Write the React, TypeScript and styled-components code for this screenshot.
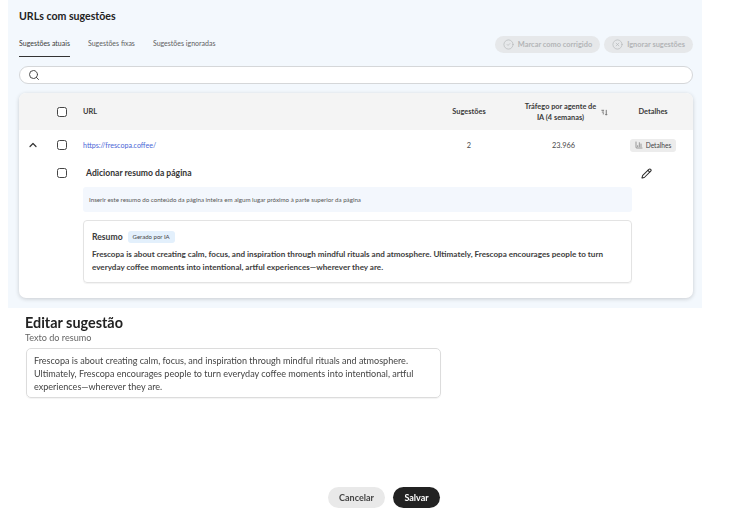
import * as React from "react";
import styled, { createGlobalStyle } from "styled-components";
import { ChevronUp, Search, CircleCheck, CircleX, Pencil, BarChart3 } from "lucide-react";

const GlobalStyle = createGlobalStyle`
  html, body {
    margin: 0;
    background: #fff;
  }
  body {
    font-family: Lato, "Open Sans", sans-serif;
    color: #2c2c2c;
  }
`;

const Page = styled.div`
  width: 750px;
  height: 526px;
  overflow: hidden;
  display: flex;
  flex-direction: column;
  filter: blur(0.25px);
`;
const Panel = styled.section`
  margin-left: 8px;
  width: 694px;
  height: 308px;
  box-sizing: border-box;
  padding: 9px 9px 0 11px;
  background: #f3f8fd;
  display: flex;
  flex-direction: column;
`;
const PanelTitle = styled.h2`
  margin: 0;
  font-size: 10.6px;
  line-height: 15px;
  font-weight: 700;
  color: #222;
`;
const TabBar = styled.div`
  margin-top: 12px;
  height: 21px;
  display: flex;
  align-items: flex-start;
  justify-content: space-between;
`;
const Tabs = styled.div`
  display: flex;
  gap: 18px;
`;
const Tab = styled.div<{ $active?: boolean }>`
  height: 21px;
  box-sizing: border-box;
  padding-top: 1px;
  font-size: 7px;
  line-height: 13px;
  color: ${(p) => (p.$active ? "#3a3a3a" : "#5f5f5f")};
  border-bottom: 1px solid ${(p) => (p.$active ? "#333" : "transparent")};
`;
const Actions = styled.div`
  display: flex;
  gap: 4px;
`;
const GhostAction = styled.div`
  height: 17px;
  padding: 0 8px 0 8px;
  border-radius: 9px;
  background: #e6e8ea;
  color: #b3b5b7;
  font-size: 7.4px;
  font-weight: 700;
  display: flex;
  align-items: center;
  gap: 4px;
`;
const SearchBox = styled.div`
  margin-top: 9px;
  height: 18px;
  box-sizing: border-box;
  border: 1px solid #d5d7d9;
  border-radius: 9px;
  background: #fff;
  display: flex;
  align-items: center;
  padding-left: 8px;
  color: #4a4a4a;
`;
const TableCard = styled.div`
  margin-top: 9px;
  width: 674px;
  height: 205px;
  background: #fff;
  border-radius: 7px;
  box-shadow: 0 1px 4px rgba(0, 0, 0, 0.18);
  overflow: hidden;
`;
const columns = "28px 30px 347px 90px 99px 80px";
const HeaderRow = styled.div`
  display: grid;
  grid-template-columns: ${columns};
  align-items: center;
  height: 37px;
  background: #f4f4f4;
  font-size: 7.4px;
  line-height: 11px;
  font-weight: 700;
  color: #3a3a3a;
`;
const DataRow = styled.div`
  display: grid;
  grid-template-columns: ${columns};
  align-items: center;
  height: 30px;
  font-size: 7.4px;
  color: #4a4a4a;
`;
const Cell = styled.div<{ $center?: boolean }>`
  display: flex;
  align-items: center;
  justify-content: ${(p) => (p.$center ? "center" : "flex-start")};
  text-align: ${(p) => (p.$center ? "center" : "left")};
`;
const UrlCell = styled(Cell)`
  padding-left: 6px;
`;
const UrlLink = styled.a`
  color: #4a66d6;
  font-size: 7.1px;
`;
const TrafficHead = styled(Cell)`
  position: relative;
  padding: 0 6px 0 0;
`;
const SortMark = styled.svg`
  position: absolute;
  right: 5px;
  top: 50%;
  margin-top: -3px;
`;
const Box = styled.span`
  display: block;
  width: 10px;
  height: 10px;
  box-sizing: border-box;
  border: 1.2px solid #444;
  border-radius: 2.5px;
  background: #fff;
`;
const DetailsBadge = styled.div`
  height: 13px;
  padding: 0 5px;
  border-radius: 3px;
  background: #ececec;
  display: flex;
  align-items: center;
  gap: 3px;
  font-size: 6.6px;
  color: #444;
`;
const Expanded = styled.div`
  display: grid;
  grid-template-columns: 28px 30px 6px 549px 1fr;
  grid-template-rows: 26px auto;
`;
const ExpandTitle = styled.div`
  grid-column: 4;
  padding-left: 3px;
  font-size: 8.6px;
  line-height: 26px;
  font-weight: 700;
  color: #333;
`;
const EditCell = styled.div`
  grid-column: 5;
  display: flex;
  align-items: center;
  justify-content: center;
  padding-right: 32px;
  color: #2c2c2c;
`;
const BoxCell = styled(Cell)`
  grid-column: 2;
  justify-content: center;
`;
const ExpandBody = styled.div`
  grid-column: 4;
  grid-row: 2;
  display: flex;
  flex-direction: column;
  gap: 8px;
  padding-top: 1px;
`;
const Hint = styled.div`
  height: 25px;
  box-sizing: border-box;
  padding-left: 6px;
  border-radius: 3px;
  background: #f3f7fd;
  font-size: 6.2px;
  line-height: 25px;
  color: #555;
`;
const SummaryCard = styled.div`
  height: 63px;
  box-sizing: border-box;
  border: 1px solid #e3e3e3;
  border-radius: 4px;
  box-shadow: 0 1px 1px rgba(0, 0, 0, 0.05);
  padding: 9px 8px 0;
`;
const SummaryHead = styled.div`
  display: flex;
  align-items: center;
  gap: 5px;
  height: 13px;
`;
const SummaryLabel = styled.span`
  font-size: 8.6px;
  font-weight: 700;
  color: #3a3a3a;
`;
const AiTag = styled.span`
  height: 12px;
  padding: 0 5px;
  border-radius: 3px;
  background: #e3f0fc;
  font-size: 6px;
  line-height: 12px;
  color: #444;
`;
const SummaryText = styled.p`
  margin: 5px 0 0;
  font-size: 8.1px;
  line-height: 13px;
  font-weight: 700;
  color: #3d3d3d;
  white-space: nowrap;
`;
const Editor = styled.section`
  padding: 6px 0 0 25px;
`;
const EditorTitle = styled.h1`
  margin: 0;
  font-size: 14.4px;
  line-height: 17px;
  font-weight: 700;
  color: #222;
`;
const FieldLabel = styled.div`
  font-size: 9.1px;
  line-height: 13px;
  color: #666;
`;
const TextBox = styled.div`
  margin: 4px 0 0 1px;
  width: 415px;
  height: 50px;
  box-sizing: border-box;
  border: 1px solid #dcdcdc;
  border-radius: 5px;
  padding: 5px 7px;
  font-size: 9.05px;
  line-height: 13px;
  color: #444;
  box-shadow: 0 1px 1px rgba(0, 0, 0, 0.05);
`;
const Footer = styled.footer`
  margin: 89px 0 0 328px;
  display: flex;
  gap: 8px;
`;
const FootButton = styled.button<{ $primary?: boolean }>`
  height: 21px;
  width: ${(p) => (p.$primary ? "47px" : "57px")};
  padding: 0;
  border: 0;
  border-radius: 11px;
  background: ${(p) => (p.$primary ? "#222" : "#e9e9e9")};
  color: ${(p) => (p.$primary ? "#fff" : "#444")};
  font-family: inherit;
  font-size: 9px;
  font-weight: 700;
`;

export default function App() {
  return (
    <Page>
      <GlobalStyle />
      <Panel>
        <PanelTitle>URLs com sugestões</PanelTitle>
        <TabBar>
          <Tabs>
            <Tab $active>Sugestões atuais</Tab>
            <Tab>Sugestões fixas</Tab>
            <Tab>Sugestões ignoradas</Tab>
          </Tabs>
          <Actions>
            <GhostAction>
              <CircleCheck size={11} strokeWidth={1.4} />
              Marcar como corrigido
            </GhostAction>
            <GhostAction>
              <CircleX size={11} strokeWidth={1.4} />
              Ignorar sugestões
            </GhostAction>
          </Actions>
        </TabBar>
        <SearchBox>
          <Search size={12} strokeWidth={2} />
        </SearchBox>
        <TableCard>
          <HeaderRow>
            <Cell />
            <Cell $center>
              <Box />
            </Cell>
            <UrlCell>URL</UrlCell>
            <Cell $center>Sugestões</Cell>
            <TrafficHead $center>
              <span>
                Tráfego por agente de
                <br />
                IA (4 semanas)
              </span>
              <SortMark width="7" height="7" viewBox="0 0 8 8" fill="none" stroke="#555" strokeWidth="0.9">
                <path d="M0.5 1.5h3M1 3.5h2.5M2 5.5h1.5M6 1v6M5 6l1 1 1-1" />
              </SortMark>
            </TrafficHead>
            <Cell $center>Detalhes</Cell>
          </HeaderRow>
          <DataRow>
            <Cell $center>
              <ChevronUp size={12} strokeWidth={2.4} color="#333" />
            </Cell>
            <Cell $center>
              <Box />
            </Cell>
            <UrlCell>
              <UrlLink>https://frescopa.coffee/</UrlLink>
            </UrlCell>
            <Cell $center>2</Cell>
            <Cell $center>23.966</Cell>
            <Cell $center>
              <DetailsBadge>
                <BarChart3 size={8} strokeWidth={1.5} />
                Detalhes
              </DetailsBadge>
            </Cell>
          </DataRow>
          <Expanded>
            <BoxCell>
              <Box />
            </BoxCell>
            <ExpandTitle>Adicionar resumo da página</ExpandTitle>
            <EditCell>
              <Pencil size={11} strokeWidth={2.2} />
            </EditCell>
            <ExpandBody>
              <Hint>Inserir este resumo do conteúdo da página inteira em algum lugar próximo à parte superior da página</Hint>
              <SummaryCard>
                <SummaryHead>
                  <SummaryLabel>Resumo</SummaryLabel>
                  <AiTag>Gerado por IA</AiTag>
                </SummaryHead>
                <SummaryText>
                  Frescopa is about creating calm, focus, and inspiration through mindful rituals and atmosphere. Ultimately, Frescopa encourages people to turn
                  <br />
                  everyday coffee moments into intentional, artful experiences—wherever they are.
                </SummaryText>
              </SummaryCard>
            </ExpandBody>
          </Expanded>
        </TableCard>
      </Panel>
      <Editor>
        <EditorTitle>Editar sugestão</EditorTitle>
        <FieldLabel>Texto do resumo</FieldLabel>
        <TextBox>
          Frescopa is about creating calm, focus, and inspiration through mindful rituals and atmosphere. Ultimately, Frescopa encourages people to turn everyday coffee moments into intentional, artful experiences—wherever they are.
        </TextBox>
      </Editor>
      <Footer>
        <FootButton>Cancelar</FootButton>
        <FootButton $primary>Salvar</FootButton>
      </Footer>
    </Page>
  );
}
